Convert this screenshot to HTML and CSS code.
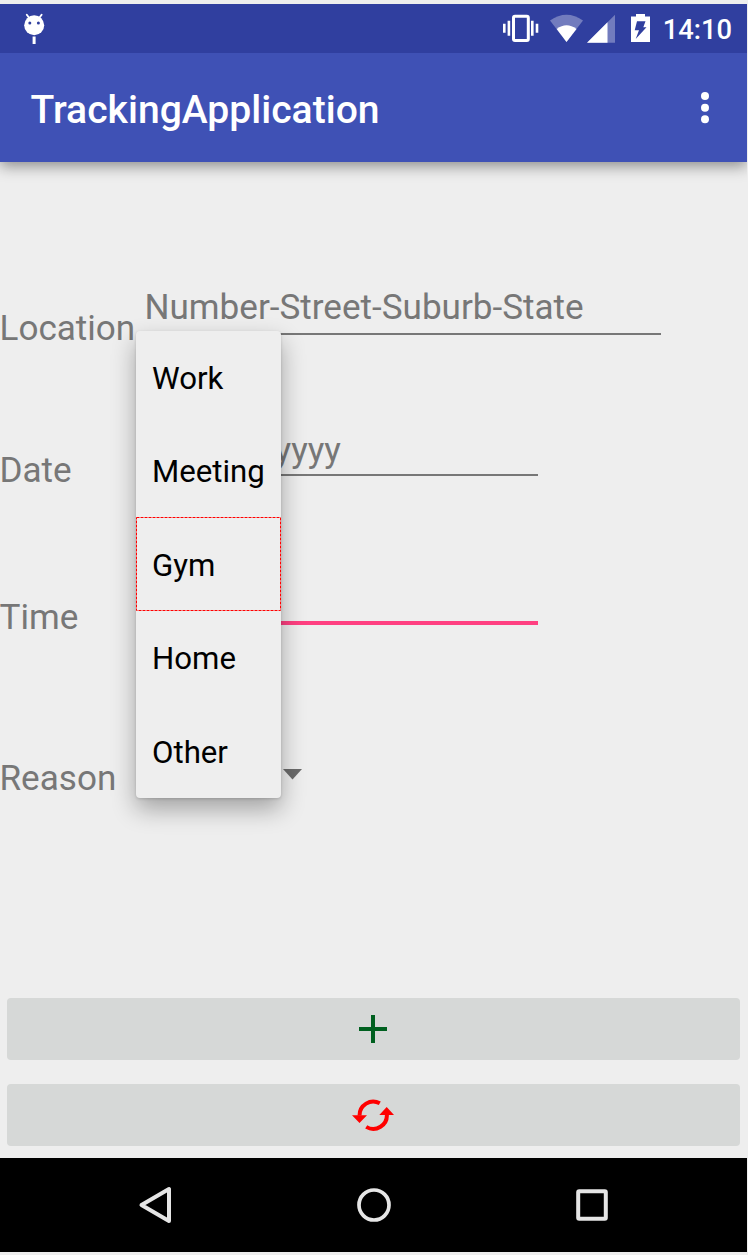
FILE: index.html
```html
<!DOCTYPE html>
<html lang="en">
<head>
<meta charset="utf-8">
<title>TrackingApplication</title>
<link rel="stylesheet" href="styles.css">
</head>
<body>
<div class="screen">
  <header class="status-bar">
    <svg class="droid" width="24" height="32" viewBox="0 0 24 32">
      <path d="M4.800 1.700l3 4M19.600 1.700l-3 4" stroke="#fff" stroke-width="1.900" stroke-linecap="round"/>
      <circle cx="12.200" cy="12.300" r="10" fill="#fff"/>
      <circle cx="7.800" cy="10" r="1.500" fill="#303f9f"/>
      <circle cx="16.400" cy="10" r="1.500" fill="#303f9f"/>
      <rect x="10.600" y="23.500" width="3" height="7.500" fill="#fff"/>
    </svg>
    <svg class="signals" width="165" height="32" viewBox="0 0 165 32">
      <rect x="23.500" y="3.200" width="14.800" height="24.300" rx="1.500" fill="none" stroke="#fff" stroke-width="3"/>
      <path d="M18.900 7.700v15M14.300 10.700v9M42.300 7.700v15M47 10.700v9" stroke="#fff" stroke-width="2.600"/>
      <path d="M60 7.500Q76.500-4 93 7.500L76.500 29z" fill="#fff" opacity=".32"/>
      <path d="M66.700 16Q76.500 8.500 86.500 16L76.500 29z" fill="#fff"/>
      <path d="M125 1.700V29.700H97z" fill="#fff" opacity=".32"/>
      <path d="M117.500 9.200v20.500H97z" fill="#fff"/>
      <path d="M141 3.500h5V1h9v2.500h5V29h-19z" fill="#fff"/>
      <path d="M147 8.300h8.500l-2.200 6h3.200L145.700 26l3.300-8.700h-4.300z" fill="#303f9f"/>
    </svg>
    <span class="clock">14:10</span>
  </header>
  <div class="app-bar">
    <h1 class="title">TrackingApplication</h1>
    <svg width="10" height="34" viewBox="0 0 10 34" fill="#fff">
      <circle cx="5" cy="5" r="4"/><circle cx="5" cy="16.700" r="4"/><circle cx="5" cy="28.300" r="4"/>
    </svg>
  </div>
  <main class="form">
    <div class="row row-location"><span class="label">Location</span><div class="field wide">Number-Street-Suburb-State</div></div>
    <div class="row row-date"><span class="label">Date</span><div class="field">dd/mm/yyyy</div></div>
    <div class="row row-time"><span class="label">Time</span><div class="field active"></div></div>
    <div class="row row-reason"><span class="label">Reason</span><svg class="caret" width="19" height="11" viewBox="0 0 19 11"><path d="M0 0h19L9.500 10.500z" fill="#6b6b6b"/></svg></div>
    <div class="actions">
      <div class="button"><svg width="28" height="28" viewBox="0 0 28 28"><path d="M14 0v28M0 14h28" stroke="#00601f" stroke-width="4"/></svg></div>
      <div class="button"><svg width="42" height="34" viewBox="0 0 42 34">
        <path d="M7.600 17.700A13.600 13.600 0 0 1 27.800 5.300M34.800 16A13.600 13.600 0 0 1 14.200 28.900" fill="none" stroke="#f00" stroke-width="4"/>
        <path d="M0 17.200h15L7.500 25zM27.300 17h14.700L34.700 9z" fill="#f00"/>
      </svg></div>
    </div>
  </main>
  <nav class="nav-bar">
    <svg width="34" height="38" viewBox="0 0 34 38"><path d="M31 3v32L3.500 19z" fill="none" stroke="#e6e6e6" stroke-width="4" stroke-linejoin="round"/></svg>
    <svg width="34" height="34" viewBox="0 0 34 34"><circle cx="17" cy="17" r="15" fill="none" stroke="#e6e6e6" stroke-width="3.700"/></svg>
    <svg width="32" height="32" viewBox="0 0 32 32"><rect x="2.200" y="2.200" width="27.600" height="27.600" rx="1" fill="none" stroke="#e6e6e6" stroke-width="4"/></svg>
  </nav>
  <div class="menu">
    <div class="item">Work</div>
    <div class="item">Meeting</div>
    <div class="item">Gym<svg class="outline" width="145" height="94" viewBox="0 0 145 94"><rect x=".5" y=".5" width="144" height="93" fill="none" stroke="#f00" stroke-dasharray="3 1"/></svg></div>
    <div class="item">Home</div>
    <div class="item">Other</div>
  </div>
</div>
</body>
</html>
```
FILE: styles.css
```css
* { box-sizing: border-box; }
body { margin: 0; background: #eee; font-family: Roboto, sans-serif; }
svg { display: block; flex: none; }
.screen {
  position: relative;
  display: flex;
  flex-direction: column;
  width: 747px;
  height: 1255px;
  padding: 4px 0 3px;
  overflow: hidden;
}
.status-bar {
  position: relative;
  z-index: 1;
  display: flex;
  align-items: flex-start;
  height: 49px;
  padding: 9px 15px 0 22px;
  background: #303f9f;
  color: #fff;
}
.signals { margin-left: 444px; }
.clock { margin-left: auto; font-size: 27.300px; font-weight: 500; line-height: 34px; }
.app-bar {
  position: relative;
  display: flex;
  align-items: center;
  justify-content: space-between;
  height: 109px;
  padding: 0 37px 0 30.500px;
  background: #3f51b5;
  color: #fff;
  box-shadow: 0 4px 14px rgba(0, 0, 0, .42);
}
.title { margin: 4px 0 0; font-size: 39.100px; font-weight: 500; line-height: 46px; }
.form {
  display: flex;
  flex-direction: column;
  height: 996px;
  padding: 125px 0 12px;
  color: #777;
  font-size: 35.100px;
  line-height: 40px;
}
.row { display: grid; grid-template-columns: 137px 1fr; align-items: start; flex: none; }
.row-location { height: 142px; }
.row-date { height: 147px; }
.row-time { height: 162px; }
.label { margin: 21px 0 0 -.5px; }
.field { width: 393px; height: 47px; margin-left: 7.500px; border-bottom: 2px solid #777; }
.row-date .field { padding-top: 1px; }
.field.wide { width: 516px; height: 47.500px; }
.field.active { height: 49px; border-bottom: 4px solid #ff4081; }
.row-reason .label { margin-top: 20px; }
.caret { margin: 31px 0 0 146px; }
.actions { display: flex; flex-direction: column; gap: 24px; margin-top: auto; padding: 0 7px; }
.button {
  display: flex;
  align-items: center;
  justify-content: center;
  height: 62px;
  padding-right: 1px;
  border-radius: 4px;
  background: #d6d8d7;
}
.nav-bar {
  display: flex;
  align-items: center;
  justify-content: space-between;
  height: 94px;
  padding: 0 139px 0 138px;
  background: #000;
}
.menu {
  position: absolute;
  left: 136px;
  top: 330.500px;
  width: 145px;
  border-radius: 4px;
  background: #eee;
  box-shadow: 0 11px 24px rgba(0, 0, 0, .32), 0 1px 3px rgba(0, 0, 0, .15);
  color: #000;
  font-size: 31.200px;
}
.item { position: relative; height: 93.600px; padding-left: 16px; line-height: 96.500px; }
.outline { position: absolute; left: 0; top: -.7px; }
```
